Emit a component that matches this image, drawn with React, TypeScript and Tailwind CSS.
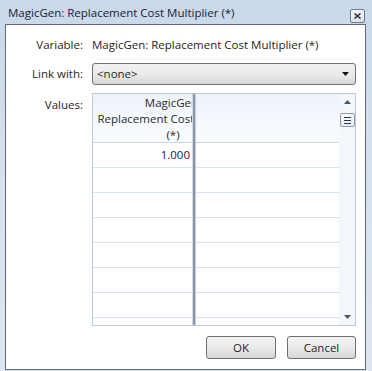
export default function App() {
  const rows = Array.from({ length: 8 });

  return (
    <div className="w-[372px] h-[371px] flex flex-col overflow-hidden bg-gradient-to-b from-[#c9d8ea] via-[#d7e2ef] to-[#dde5ef] pl-[5px] pr-[6px] pb-[1px] font-['Open_Sans',sans-serif] text-[11.5px] text-[#1e1e1e]">
      {/* Title bar */}
      <div className="h-[24px] flex items-start justify-between pl-[3px] shrink-0">
        <span className="mt-[5px] leading-[16px] text-[11.5px] text-[#15233a]">MagicGen: Replacement Cost Multiplier (*)</span>
        <div className="mt-[9px] mr-[1px] w-[15px] h-[14px] rounded-[2px] border border-[#6e7c8d] bg-gradient-to-b from-[#f4f7fb] to-[#dbe3ee] flex items-center justify-center">
          <svg width="7" height="6" viewBox="0 0 7 6">
            <path d="M0.5 0.5 L6.5 5.5 M6.5 0.5 L0.5 5.5" stroke="#2b3440" strokeWidth="1.6" />
          </svg>
        </div>
      </div>

      {/* Content */}
      <div className="flex-1 flex flex-col bg-white border border-[#5f6873] pt-[11px] pr-[9px]">
        <div className="flex h-[18px] items-center">
          <span className="w-[77px] text-right">Variable:</span>
          <span className="ml-[9px]">MagicGen: Replacement Cost Multiplier (*)</span>
        </div>

        <div className="flex mt-[9px] h-[22px] items-center">
          <span className="w-[77px] text-right">Link with:</span>
          <div className="ml-[9px] flex-1 h-[22px] rounded-[3px] border border-[#707070] bg-gradient-to-b from-[#f2f2f2] via-[#ebebeb] to-[#d8d8d8] flex items-center justify-between pl-[4px] pr-[6px]">
            <span>&lt;none&gt;</span>
            <svg width="7" height="4" viewBox="0 0 7 4">
              <path d="M0 0 H7 L3.5 4 Z" fill="#111" />
            </svg>
          </div>
        </div>

        <div className="flex mt-[8px]">
          <span className="w-[77px] text-right pt-[3px] leading-[18px]">Values:</span>
          <div className="ml-[9px] w-[264px] h-[233px] border border-[#bac8d9] flex overflow-hidden">
            {/* column 1 */}
            <div className="w-[100px] flex flex-col border-r border-[#cddbeb] shrink-0">
              <div className="h-[49px] shrink-0 border-b border-[#c9d6e5] bg-gradient-to-b from-[#eef2fa] to-[#fafcff] overflow-hidden">
                <div className="w-[160px] text-center leading-[16px] pt-[1px] text-[#2a2a2a]">
                  <div className="whitespace-nowrap">MagicGen:</div>
                  <div className="whitespace-nowrap">Replacement Cost Multiplier</div>
                  <div className="whitespace-nowrap">(*)</div>
                </div>
              </div>
              {rows.map((_, i) => (
                <div key={i} className="h-[25px] shrink-0 border-b border-[#d6e3f1] flex items-center justify-end pr-[2px]">
                  {i === 0 ? "1.000" : ""}
                </div>
              ))}
            </div>
            {/* divider */}
            <div className="w-[3px] shrink-0 border-l-2 border-[#8f98a3] bg-[#c6ccd3]" />
            {/* column 2 */}
            <div className="flex-1 flex flex-col">
              <div className="h-[49px] shrink-0 border-b border-[#c9d6e5] bg-gradient-to-b from-[#eef2fa] to-[#fafcff]" />
              {rows.map((_, i) => (
                <div key={i} className="h-[25px] shrink-0 border-b border-[#d6e3f1]" />
              ))}
            </div>
            {/* scrollbar */}
            <div className="w-[16px] shrink-0 bg-[#f3f6fb] flex flex-col items-center">
              <svg className="mt-[6px]" width="7" height="4" viewBox="0 0 7 4">
                <path d="M3.5 0 L7 4 H0 Z" fill="#4a5563" />
              </svg>
              <div className="mt-[9px] w-[15px] h-[14px] rounded-[2px] border border-[#8c9db2] bg-gradient-to-b from-[#fbfcfe] to-[#e6ecf4] flex flex-col items-center justify-center gap-[2px]">
                <div className="w-[7px] h-[1px] bg-[#2f3a48]" />
                <div className="w-[7px] h-[1px] bg-[#2f3a48]" />
                <div className="w-[7px] h-[1px] bg-[#2f3a48]" />
              </div>
              <div className="flex-1" />
              <svg className="mb-[6px]" width="7" height="4" viewBox="0 0 7 4">
                <path d="M0 0 H7 L3.5 4 Z" fill="#4a5563" />
              </svg>
            </div>
          </div>
        </div>

        <div className="flex justify-end gap-[11px] mt-[10px]">
          <button className="w-[70px] h-[23px] rounded-[3px] border border-[#707070] bg-gradient-to-b from-[#f2f2f2] via-[#ebebeb] to-[#d6d6d6] text-[11.5px] text-[#1e1e1e]">OK</button>
          <button className="w-[69px] h-[23px] rounded-[3px] border border-[#707070] bg-gradient-to-b from-[#f2f2f2] via-[#ebebeb] to-[#d6d6d6] text-[11.5px] text-[#1e1e1e]">Cancel</button>
        </div>
      </div>
    </div>
  );
}
